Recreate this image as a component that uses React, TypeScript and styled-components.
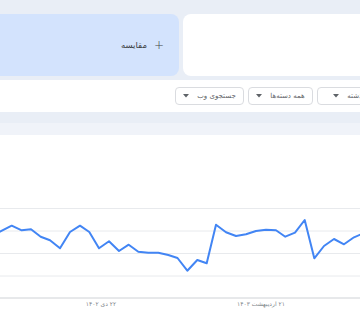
import React from "react";
import styled, { createGlobalStyle } from "styled-components";

const Global = createGlobalStyle`
  html, body {
    margin: 0;
    padding: 0;
    width: 360px;
    height: 320px;
    overflow: hidden;
    background: #e9eef6;
  }
  body {
    font-family: "DejaVu Sans", "Noto Sans", sans-serif;
  }
`;

const Page = styled.div`
  width: 420px;
  margin-left: -16px;
  direction: rtl;
  display: flex;
  flex-direction: column;
`;

const CompareRow = styled.div`
  display: flex;
  gap: 4px;
  padding: 14px 26px 0 0;
  height: 62px;
`;

const TermCard = styled.div`
  flex: none;
  width: 195px;
  background: #ffffff;
  border-radius: 8px;
`;

const CompareCard = styled.div`
  flex: none;
  width: 195px;
  box-sizing: border-box;
  background: #d3e3fd;
  border-radius: 8px;
  display: flex;
  align-items: center;
  gap: 7px;
  padding-right: 15px;
  color: #3c4043;
  font-size: 8.5px;
`;

const Plus = styled.span`
  font-size: 12px;
  font-weight: 300;
  line-height: 1;
  color: #444746;
`;

const FilterBar = styled.div`
  margin-top: 4px;
  height: 32px;
  background: #ffffff;
  display: flex;
  align-items: center;
  gap: 4px;
`;

const Dropdown = styled.div<{ $w: number }>`
  flex: none;
  width: ${(p) => p.$w}px;
  height: 18px;
  box-sizing: border-box;
  border: 1px solid #dadce0;
  border-radius: 4px;
  display: flex;
  align-items: center;
  justify-content: center;
  gap: 8px;
  font-size: 7px;
  color: #5f6368;
  white-space: nowrap;
`;

const Gap = styled.div`
  height: 11px;
`;

const ChartCard = styled.div`
  display: flex;
  flex-direction: column;
  background: #ffffff;
`;

const ChartHeader = styled.div`
  height: 12px;
  background: #f0f3f9;
`;

const ChartSvg = styled.svg`
  display: block;
`;

const Caret = () => (
  <svg width="6" height="4" viewBox="0 0 6 4">
    <polygon points="0,0 6,0 3,3.6" fill="#5f6368" />
  </svg>
);

const points: [number, number][] = [
  [-8, 236], [0, 231.7], [11.7, 225.7], [21.7, 230.3], [31, 229.3], [40.7, 236.7],
  [50, 240.3], [60, 248.3], [70, 232], [80, 225.7], [89.3, 232], [99, 248.3],
  [109, 241.3], [119, 251], [128.7, 244.7], [138.3, 251.7], [148.3, 252.7],
  [158.3, 252.7], [168.3, 255], [177.5, 258], [187.3, 270.7], [197.3, 260],
  [206.7, 263.3], [216, 224.7], [226, 232.3], [236, 236], [246, 234.3], [256, 231],
  [266, 229.7], [276, 230.3], [285.3, 236.7], [295, 232.7], [304.7, 220],
  [314.3, 258.3], [324, 246], [334, 239], [344, 244.3], [354, 237.3], [364, 233],
  [374, 232],
];

const grid = [208.5, 231, 253.5, 276];

export default function App() {
  return (
    <>
      <Global />
      <Page>
        <CompareRow>
          <TermCard />
          <CompareCard>
            <Plus>+</Plus>
            <span>مقایسه</span>
          </CompareCard>
        </CompareRow>
        <FilterBar>
          <Dropdown $w={87}>
            <span>۱۲ ماه گذشته</span>
            <Caret />
          </Dropdown>
          <Dropdown $w={65}>
            <span>همه دسته‌ها</span>
            <Caret />
          </Dropdown>
          <Dropdown $w={69}>
            <span>جستجوی وب</span>
            <Caret />
          </Dropdown>
        </FilterBar>
        <Gap />
        <ChartCard>
          <ChartHeader />
          <ChartSvg width={420} height={185} viewBox="-16 135 420 185">
            {grid.map((y) => (
              <line key={y} x1={-16} x2={404} y1={y} y2={y} stroke="#e8eaed" strokeWidth={1} />
            ))}
            <line x1={-16} x2={404} y1={298} y2={298} stroke="#cfd2d6" strokeWidth={1} />
            <polyline
              points={points.map((p) => p.join(",")).join(" ")}
              fill="none"
              stroke="#4285f4"
              strokeWidth={2}
              strokeLinejoin="round"
            />
            <text x={101} y={306} fontSize={6} fill="#80868b" textAnchor="middle" direction="rtl" fontFamily="DejaVu Sans, sans-serif">
              ۲۲ دی ۱۴۰۲
            </text>
            <text x={261} y={306} fontSize={6} fill="#80868b" textAnchor="middle" direction="rtl" fontFamily="DejaVu Sans, sans-serif">
              ۲۱ اردیبهشت ۱۴۰۳
            </text>
          </ChartSvg>
        </ChartCard>
      </Page>
    </>
  );
}
